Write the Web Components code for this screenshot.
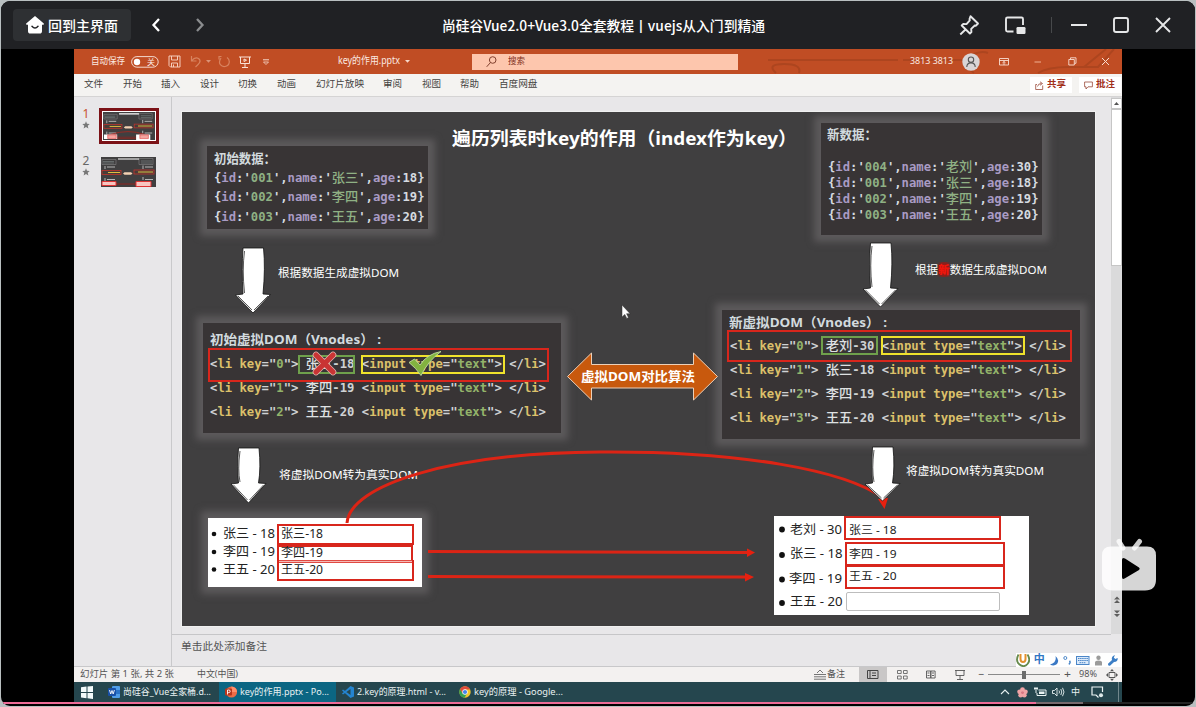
<!DOCTYPE html>
<html lang="zh-CN">
<head>
<meta charset="utf-8">
<title>尚硅谷Vue2.0+Vue3.0全套教程丨vuejs从入门到精通</title>
<style>
html,body{margin:0;height:100%;overflow:hidden;background:#b9bfc0}
body{font-family:"Noto Sans","Noto Sans CJK SC",sans-serif}
</style>
</head>
<body>
<course-player></course-player>
<script>
const make = (name, html, setup) => customElements.define(name, class extends HTMLElement {
  connectedCallback() {
    if (this.shadowRoot) return;
    this.attachShadow({ mode: 'open' }).innerHTML = html;
    if (setup) setup(this, this.shadowRoot);
  }
});
const num = (el, a) => parseFloat(el.getAttribute(a));

/* One line of text set to an exact measure */
make('fit-text', `<style>
:host{display:block;flex:none;white-space:pre;height:20px;line-height:20px}
span{display:inline-block;transform-origin:0 50%;white-space:pre;line-height:20px}
</style><span><slot></slot></span>`, (el, root) => {
  if (el.hasAttribute('size')) el.style.fontSize = el.getAttribute('size') + 'px';
  const span = root.querySelector('span'), w = num(el, 'w');
  el.style.width = w + 'px';
  const natural = span.getBoundingClientRect().width;
  if (natural) span.style.transform = `scaleX(${w / natural})`;
});

const icons = {
  home: [20, 20, '<path d="M10 1 1.2 8.6c-.4.5-.1 1.2.5 1.2H3v6.4c0 1.5 1 2.3 2.3 2.3h9.4c1.3 0 2.3-.8 2.3-2.3V9.8h1.3c.6 0 .9-.7.5-1.2L15.6 5.800z" fill="#fff"/><path d="M7 11.300q3 3.600 6 0" fill="none" stroke="#202124" stroke-width="1.500" stroke-linecap="round"/>'],
  back: [10, 16, '<path d="M8 2 2.500 8 8 14" fill="none" stroke="#fff" stroke-width="2.300"/>'],
  next: [10, 16, '<path d="M2 2 7.500 8 2 14" fill="none" stroke="#8a8c8e" stroke-width="2.300"/>'],
  pin: [22, 22, '<path d="M12.500 2.200 20 9.500l-2 2.200-1.200-.2-3.600 3.400.2 3.200-1.500 1.400-8.200-8 1.600-1.600 3.200.2 3.300-3.800-.3-1.300zM7.500 15.500l-5.200 5" fill="none" stroke="#e6e7e8" stroke-width="1.900" stroke-linejoin="round"/>'],
  pip: [22, 20, '<path d="M9.500 16.500H3.500q-1.500 0-1.500-1.500V4q0-1.500 1.500-1.500h14Q19 2.500 19 4v6" fill="none" stroke="#e6e7e8" stroke-width="1.900"/><rect x="12.500" y="12" width="9" height="7" rx="1.200" fill="#e6e7e8"/>'],
  wmin: [18, 18, '<path d="M1 9h16" stroke="#e6e7e8" stroke-width="1.900"/>'],
  wmax: [18, 18, '<rect x="2" y="2" width="14" height="14" rx="2" fill="none" stroke="#e6e7e8" stroke-width="1.900"/>'],
  wclose: [18, 18, '<path d="M2 2l14 14M16 2 2 16" stroke="#e6e7e8" stroke-width="1.900"/>'],
  toggle: [28, 12, '<rect x=".6" y=".6" width="26.600" height="10.600" rx="5.300" fill="none" stroke="#f3d9ce"/><circle cx="6" cy="6" r="3.200" fill="#fff"/>'],
  save: [13, 13, '<path d="M1 1h11v11H2.500L1 10.500zM3.500 1v4h6V1M3.500 12V8h6v4M5.500 12V9.500" fill="none" stroke="#f5cdbb"/>'],
  undo: [12, 13, '<path d="M1.500 1v5h5M1.500 6Q5 1.500 8.500 3.500C12 6 9 9 5.500 12" fill="none" stroke="#d8835f" stroke-width="1.200"/>'],
  redo: [13, 13, '<path d="M3.500 1.500H1v3M3 3C-1 9 4 12 7 11.500c5-1 5.500-6.500 2-9" fill="none" stroke="#d8835f" stroke-width="1.200"/>'],
  show: [12, 12, '<path d="M0 1h12M1.500 1v6.500h9V1M6 7.500V11M3 11.500h6M5 3l2.500 1.200L5 5.500z" fill="none" stroke="#fbe3d8"/>'],
  more: [6, 6, '<path d="M0 .8h6" stroke="#f6d8ca"/><path d="M.5 3h5L3 5.500z" fill="none" stroke="#f6d8ca" stroke-width=".8"/>'],
  caret: [5, 3, '<path d="M0 0h5L2.500 2.800z" fill="#f6d8ca"/>'],
  find: [11, 12, '<circle cx="6.700" cy="4" r="3.300" fill="none" stroke="#80402e"/><path d="M4.500 6.500.7 10.800" stroke="#80402e"/>'],
  user: [18, 18, '<circle cx="9" cy="9" r="8.700" fill="#d9d5d6"/><circle cx="9" cy="6.700" r="2.700" fill="none" stroke="#555" stroke-width="1.100"/><path d="M4.800 14c0-5.500 8.400-5.500 8.400 0" fill="none" stroke="#555" stroke-width="1.100"/>'],
  ribbon: [10, 8, '<path d="M.5.500h9v6.500h-9zM.5 2.500h9M5 7V3.500M3.500 4.800 5 3.500l1.500 1.300" fill="none" stroke="#f8ddd1" stroke-width=".9"/>'],
  min: [8, 8, '<path d="M.5 4h6.500" stroke="#f0b192"/>'],
  restore: [9, 9, '<path d="M.8 2.500h5.500V8H.8zM2.500 2.500V.8H8v5.500H6.500" fill="none" stroke="#f8ddd1" stroke-width=".9"/>'],
  close: [9, 9, '<path d="m1 1 7 7M8 1 1 8" stroke="#f8ddd1"/>'],
  share: [9, 9, '<path d="M2 3.500H.7v5h7v-4M2.500 5.500q.5-3 4-3M5 .8l2.500 1.700L5 4.300" fill="none" stroke="#9b4a3a" stroke-width=".8"/>'],
  comment: [9, 9, '<path d="M.6 1h7.800v4.800H4L2 8V5.800H.6z" fill="none" stroke="#9b4a3a" stroke-width=".8"/>'],
  star: [8, 8, '<path d="m4 .3 1 2.500 2.700.2-2 1.700.7 2.800L4 6 1.600 7.500l.7-2.800-2-1.700L3 2.800z" fill="#777"/>'],
  up: [9, 9, '<path d="M4.500 3 7 6H2z" fill="#555"/>'],
  pgup: [6, 9, '<path d="M3 .5 6 3.500H0zM3 4l3 3H0z" fill="#5e5e5e"/>'],
  pgdn: [6, 9, '<path d="M3 8 0 5h6zM3 4.500l-3-3h6z" fill="#5e5e5e"/>'],
  notes: [12, 11, '<path d="M0 5.500h12M0 7.800h12M0 10.200h12M3 4l3-3 3 3" fill="none" stroke="#666" stroke-width=".9"/>'],
  normal: [12, 9, '<path d="M.5.500h10.500v8H.5zM3 .5v8M5 3h4M5 5.500h4" fill="none" stroke="#444"/>'],
  sorter: [11, 10, '<path d="M.5.500h3.700v3H.5zM6.500.5h3.700v3H6.500zM.5 6h3.700v3H.5zM6.500 6h3.700v3H6.500z" fill="none" stroke="#666" stroke-width=".9"/>'],
  reading: [10, 9, '<path d="M.5 1h4.300v7H.5zM4.800 1h4.300v7H4.800zM1.500 3h2M1.500 5.500h2M6 3h2M6 5.500h2" fill="none" stroke="#555" stroke-width=".9"/>'],
  proj: [10, 10, '<path d="M0 .5h10M1 .5v5h8v-5M5 5.500v4M2 9.500h6" fill="none" stroke="#555" stroke-width=".9"/>'],
  fitwin: [12, 12, '<path d="M3 3.500h6v5H3z" fill="none" stroke="#555"/><path d="m6 0 2 2.300H4zM6 12l2-2.300H4zM0 6l2-2v4zM12 6l-2-2v4z" fill="#555"/>'],
  win: [13, 13, '<path d="M0 1.200 5.500.5v5.500H0zM6.500.4 12 0v6H6.500zM0 7h5.500v5.200L0 11.500zM6.500 7H12v6l-5.500-.7z" fill="#f2fafa"/>'],
  word: [12, 12, '<rect x="4" width="8" height="12" rx="1" fill="#4f9de8"/><path d="M4 4h8v4H4z" fill="#2b74c8"/><rect y="2" width="8" height="8" rx="1" fill="#1850a8"/><path d="m1.500 4 1.200 4L4 4.500 5.200 8l1.200-4" fill="none" stroke="#fff" stroke-width=".9"/>'],
  ppt: [12, 12, '<circle cx="6.500" cy="6" r="5.600" fill="#ed6c47"/><path d="M6.500.5A5.500 5.500 0 0 1 12 6H6.500z" fill="#ff8f6b"/><rect y="2.500" width="7" height="7" rx="1" fill="#b7361d"/><path d="M2.500 8.500V4h1.200q1.500 0 1.500 1.300T3.700 6.600H2.500" fill="none" stroke="#fff" stroke-width=".9"/>'],
  code: [12, 12, '<path d="M8.500 0 12 1.500v9L8.500 12 0 4.500 1 3.500 8.500 9V3L1 8.500l-1-1z" fill="#2484d0"/>'],
  chrome: [12, 12, '<circle cx="6" cy="6" r="5.700" fill="#f2c52c"/><path d="M6 .3A5.700 5.700 0 0 0 1 3.300L3.800 8 6 3.500h5A5.700 5.700 0 0 0 6 .3" fill="#df4b3c"/><path d="M1 3.200A5.700 5.700 0 0 0 5.500 11.700L8 7.500 4 8z" fill="#35a153"/><circle cx="6" cy="6" r="2.700" fill="#fff"/><circle cx="6" cy="6" r="2.100" fill="#4385ec"/>'],
  chev: [10, 6, '<path d="m1 5 4-4 4 4" fill="none" stroke="#e8f2f2" stroke-width="1.100"/>'],
  flower: [11, 11, '<g fill="#f0a3a5"><circle cx="5.500" cy="2.700" r="2.400"/><circle cx="2.600" cy="4.800" r="2.400"/><circle cx="8.400" cy="4.800" r="2.400"/><circle cx="3.700" cy="8.200" r="2.400"/><circle cx="7.300" cy="8.200" r="2.400"/></g><circle cx="5.500" cy="5.700" r="1.300" fill="#dc7582"/>'],
  battery: [13, 10, '<path d="M4.500 3h7.500v5.500H3V6" fill="none" stroke="#eaf3f3"/><path d="M5 4.500h5.500V7H5z" fill="#eaf3f3"/><path d="M0 1.500h4M1 0v3M3 0v3M2 3v3" stroke="#eaf3f3" fill="none"/>'],
  sound: [13, 10, '<path d="M.5 3.500H2.500L5 1v8L2.500 6.500H.5zM7 3.500q1 1.500 0 3M8.800 2q2 3 0 6M10.500.8q3 4.200 0 8.400" fill="none" stroke="#e8f2f2" stroke-width=".9"/>'],
  note: [13, 12, '<path d="M11.500 6V1H1v8h4l2.500 2.500" fill="none" stroke="#eef6f6" stroke-width="1.200"/><circle cx="10" cy="9.300" r="2" fill="#dce7e8"/>'],
  ulogo: [14, 14, '<path d="M2.500 1.500Q-1 8 3.500 11.500t8-.5Q15 7 11.500 1.500" fill="none" stroke="#668a4c" stroke-width="1.800"/><path d="M4.500 1v5q0 3 2.500 3t2.500-3V1" fill="none" stroke="#e3902d" stroke-width="2"/>'],
  moon: [11, 11, '<path d="M6.500 1Q11 5 8 9 5 11.500 1 9.500 8 8 6.500 1" fill="#3b79c5"/>'],
  punct: [9, 10, '<circle cx="2.300" cy="3" r="1.500" fill="none" stroke="#4b86c8"/><path d="M6.500 5.800q1.500 2-.7 3.500" fill="none" stroke="#4b86c8" stroke-width="1.500"/>'],
  keys: [14, 9, '<rect x=".5" y=".5" width="12.500" height="8" fill="#dceafa" stroke="#4b86c8"/><path d="M2 2.500h10M2 4.500h10M3.500 6.700H10" stroke="#4b86c8" stroke-dasharray="1.500 .6"/>'],
  person: [9, 11, '<circle cx="4.500" cy="2.800" r="2.200" fill="#9b9b9b"/><path d="M1 10.500V7.500q0-2 3.500-2T8 7.500v3z" fill="#9b9b9b"/>'],
  wrench: [11, 11, '<path d="M1 8.800 5 5q-1-3 2-4.500L8 0 6.800 2.500l1.500 1.600L10.700 3q.3 4-3.700 4L3 10.700Q.5 11 1 8.800" fill="#3d7fc6"/>'],
  tv: [56, 54, '<path d="M18 3.500 22 10M38.500 3.500 33.500 10" stroke="#fff" stroke-width="5" stroke-linecap="round" opacity=".8"/><path fill-rule="evenodd" fill="#fff" opacity=".84" d="M10 8.500h36q9 0 9 9v24q0 11-11 11H12q-11 0-11-11v-24q0-9 9-9M21 22v17q0 3 3 1.300L38 32q1.500-1.200 0-2.500L24 20.500Q21 19 21 22"/>'],
};
make('ui-icon', '', (el, root) => {
  const [w, h, body] = icons[el.getAttribute('name')];
  root.innerHTML = `<style>:host{display:block;flex:none;width:${w}px;height:${h}px}svg{display:block}</style><svg width="${w}" height="${h}" viewBox="0 0 ${w} ${h}">${body}</svg>`;
});

make('player-header', `<style>
:host{display:grid;grid-template-columns:440.500px 1fr 237.500px;align-items:center;height:48px;background:#202124;color:#fff}
div{display:flex;align-items:center}
.home{margin-left:12px;width:118px;height:32px;border-radius:4px;background:#2e3033;gap:3px;padding-left:12px;box-sizing:border-box}
fit-text{font-family:"Noto Sans CJK SC",sans-serif;font-weight:500;margin-top:-1px}
.sep{width:1px;height:16px;background:#47494b;margin:0 18px 0 25px}
</style>
<div><div class="home"><ui-icon name="home"></ui-icon><fit-text w="70" size="14">回到主界面</fit-text></div><ui-icon name="back" style="margin-left:20px"></ui-icon><ui-icon name="next" style="margin-left:34px"></ui-icon></div>
<fit-text w="323" size="14">尚硅谷Vue2.0+Vue3.0全套教程丨vuejs从入门到精通</fit-text>
<div><ui-icon name="pin"></ui-icon><ui-icon name="pip" style="margin-left:24px"></ui-icon><span class="sep"></span><ui-icon name="wmin"></ui-icon><ui-icon name="wmax" style="margin-left:24px"></ui-icon><ui-icon name="wclose" style="margin-left:24px"></ui-icon></div>`);

make('ppt-titlebar', `<style>
:host{display:grid;grid-template-columns:398px 266px 1fr;align-items:center;height:25px;background:#c04d24;color:#fbe9e1;position:relative}
.deco{position:absolute;left:664px;top:0;z-index:0}
div{display:flex;align-items:center;position:relative;height:24px}
.search{background:#fdc6ad;color:#80301d;height:16px}
.tg{position:relative;margin-left:6px}
.tg fit-text{position:absolute;left:16px;top:-4px}
</style>
<svg class="deco" width="384" height="25" fill="none" stroke="#ad451f" stroke-width="2"><path d="M30 11h130M38 24q-10-9 8-9t15 9M165 11h60M236 24c-20-14 4-24 14-20M300 24q10-6 30-6h30l16-18M346 18l22-18"/></svg>
<div><fit-text w="34" size="9.500" style="margin:-2px 0 0 17px">自动保存</fit-text><span class="tg"><ui-icon name="toggle"></ui-icon><fit-text w="8" size="8">关</fit-text></span><ui-icon name="save" style="margin-left:9px"></ui-icon><ui-icon name="undo" style="margin-left:9px"></ui-icon><ui-icon name="caret" style="margin-left:4px;opacity:.5"></ui-icon><ui-icon name="redo" style="margin-left:7px"></ui-icon><ui-icon name="show" style="margin-left:8px"></ui-icon><ui-icon name="more" style="margin-left:12px"></ui-icon><fit-text w="62" size="10" style="margin-left:69px;margin-top:-3px">key的作用.pptx</fit-text><ui-icon name="caret" style="margin-left:5px"></ui-icon></div>
<div class="search"><ui-icon name="find" style="margin-left:14px"></ui-icon><fit-text w="17" size="9" style="margin:-2px 0 0 11px">搜索</fit-text></div>
<div><fit-text w="43" size="9.500" style="margin:-2px 0 0 172px">3813 3813</fit-text><ui-icon name="user" style="margin-left:9px"></ui-icon><ui-icon name="ribbon" style="margin-left:19px"></ui-icon><ui-icon name="min" style="margin-left:25px"></ui-icon><ui-icon name="restore" style="margin-left:26px"></ui-icon><ui-icon name="close" style="margin-left:24px"></ui-icon></div>`);

make('ppt-menu', `<style>
:host{display:flex;align-items:center;height:23px;background:#f4f3f1;color:#454341;padding-left:10px;border-bottom:1px solid #d5d4d4;box-sizing:border-box}
nav{display:flex;gap:19.600px;flex:1;margin-top:-2px}
.b{display:flex;align-items:center;gap:3px;height:16px;background:#fff;color:#a2301b;margin-right:7px;padding:0 5px 0 5px;width:32px;font-weight:600}
.b fit-text{margin-top:-2px}
.b:last-child{margin-right:1px}
</style>
<nav>${['文件', '开始', '插入', '设计', '切换', '动画', '幻灯片放映', '审阅', '视图', '帮助', '百度网盘'].map(t => `<fit-text size="9.600" w="${{ 2: 19, 4: 38.500, 5: 48 }[t.length]}">${t}</fit-text>`).join('')}</nav>
<span class="b"><ui-icon name="share"></ui-icon><fit-text w="19" size="9.500">共享</fit-text></span><span class="b"><ui-icon name="comment"></ui-icon><fit-text w="19" size="9.500">批注</fit-text></span>`);

const mini = `<rect width="55" height="30" fill="#403f40"/><g fill="none" stroke="#747274" stroke-width=".8"><path d="M1 2.500h14v5H1zM38 1.500h14v6H38z"/></g><path d="M17 2h21" stroke="#fff" stroke-width="1.200"/><path d="M2 4.500h11M40 4h11M2 6h11M40 6h11" stroke="#8c9a98" stroke-width=".5"/><path d="M4 9v3M42 8.500V12M4 21v3M42 20v3M6 10h8M44 10h8M6 22.500h8M44 22.500h8" stroke="#d6d6d6" stroke-width=".8"/><rect x="1" y="13.500" width="19" height="4" stroke="#c3332c" fill="#463d38" stroke-width=".8"/><rect x="33" y="13" width="20" height="4" stroke="#c3332c" fill="#463d38" stroke-width=".8"/><path d="M7 15.500h12M37 15h15" stroke="#dfbf40"/><path d="M22 16.500 23.500 15.300h6.500l1.500 1.200-1.500 1.200h-6.500z" fill="#f3d1b2"/>`;
make('slide-thumb', `<style>
:host{display:grid;grid-template-columns:12px auto;column-gap:7px;color:#666;font-size:12px;padding-left:6px}
.l{display:flex;flex-direction:column;align-items:center;line-height:12px;gap:1px}
.f{justify-self:start;padding:2px}
:host([active]) .l{color:#c7502b}
:host([active]) .f{background:#fff;border:3px solid #7c1217;padding:1px}
svg{display:block}
</style><span class="l"><slot></slot><ui-icon name="star"></ui-icon></span><span class="f"><svg width="53" height="29" viewBox="0 0 55 30" preserveAspectRatio="none"></svg></span>`, (el, root) => {
  const act = el.hasAttribute('active'), svg = root.querySelector('svg');
  svg.setAttribute('width', act ? 52 : 55); svg.setAttribute('height', act ? 28 : 30);
  svg.innerHTML = mini + (act ? '<path d="M8 24Q27 18 44 24" fill="none" stroke="#b3261e" stroke-width=".8"/><path d="M15 27h20M15 28.500h20" stroke="#8e241f" stroke-width=".8"/><path d="M1 24h14v5H1zM35 24h15v6H35z" fill="#fff"/><path d="M5 24.500h9v4H5zM39 24.500h9v4h-9z" fill="#f2a5a0" stroke="#d33" stroke-width=".6"/>' : '<path d="M15 27h20" stroke="#8e241f"/><path d="M1 24.500h14v4H1zM35 24.500h15v5H35z" fill="#f7c5c0" stroke="#d33"/>');
});

/* Nodes on the slide take their place from x / y / w / h */
const OX = 182, OY = 112;
const place = el => {
  const s = el.style;
  s.left = num(el, 'x') - OX + 'px'; s.top = num(el, 'y') - OY + 'px';
  if (el.hasAttribute('w')) s.width = num(el, 'w') + 'px';
  if (el.hasAttribute('h')) s.height = num(el, 'h') + 'px';
};
make('slide-panel', `<style>
:host{position:absolute;background:#383435}
:host([glow]){box-shadow:0 0 7px 7px #5c5a5b}
:host([paper]){background:#fff;color:#222}
</style><slot></slot>`, place);
make('slide-frame', `<style>:host{position:absolute;box-sizing:border-box;border:2px solid var(--c,#d8261c)}</style>`, place);
make('slide-label', `<style>:host{position:absolute;display:block}</style>`, (el, root) => {
  const t = document.createElement('fit-text');
  el.style.left = num(el, 'x') - OX + 'px'; el.style.top = num(el, 'y') - 10 - OY + 'px';
  t.setAttribute('w', el.getAttribute('w')); t.setAttribute('size', el.getAttribute('size') || 12);
  t.append(document.createElement('slot'));
  root.append(t);
});
const codeCss = `:host{position:absolute;display:block;font-family:"DejaVu Sans Mono","Noto Sans CJK SC",monospace;font-weight:bold;color:#d6dbe0}
i{font-style:normal;font-weight:500;font-size:13px;line-height:1}`;
make('data-line', `<style>${codeCss} b{color:#a99bc4}s,i{color:#8fb184;text-decoration:none}</style>`, (el, root) => {
  el.style.left = num(el, 'x') - OX + 'px'; el.style.top = num(el, 'y') - 10 - OY + 'px';
  const [id, name, age] = el.dataset.v.split(' ');
  root.innerHTML += `<fit-text w="210.500" size="12">{<b>id</b>:'<s>${id}</s>',<b>name</b>:'<i>${name}</i>',<b>age</b>:${age}}</fit-text>`;
});
make('li-line', `<style>${codeCss} :host{color:#cfd2d4} b{color:#dcc06a}s{color:#93b36a;text-decoration:none}i{color:#dfe1e2}</style>`, (el, root) => {
  el.style.left = num(el, 'x') - OX + 'px'; el.style.top = num(el, 'y') - 10 - OY + 'px';
  const [k, name, age] = el.dataset.v.split(' ');
  root.innerHTML += `<fit-text w="336" size="12">&lt;<b>li key</b>="<s>${k}</s>"&gt; <i>${name}</i>-${age} &lt;<b>input type</b>="<s>text</s>"&gt; &lt;/<b>li</b>&gt;</fit-text>`;
});

const down = (x, y, sy, ty) => `<g transform="translate(${x} 0)"><path d="M-10 ${y}H10.500Q12.500 ${y + 20} 10 ${sy - 1}L17.500 ${sy - .5} 0 ${ty} -17.500 ${sy} -10 ${sy - 1}Q-11.500 ${y + 20} -10 ${y}" fill="#fff" stroke="#111" stroke-width=".8"/><path d="M-8.500 ${y + 3}Q-11 ${y + 22} -8.500 ${sy - 2}M15 ${sy + 1} 1 ${ty - 3}M-15 ${sy + 1} -1 ${ty - 3}" fill="none" stroke="#111" stroke-width=".7"/></g>`;
make('ppt-slide', `<style>
:host{display:block;position:relative;width:913px;height:514px;background:#403f40;color:#fff;overflow:hidden}
.ov{position:absolute;left:0;top:0}
.b{font-weight:700}.h{font-weight:700;color:#d2dade}
.k{color:#222}
em{font-style:normal;color:#f0160c;font-weight:900;background:radial-gradient(#c01510,#8a1f1b 60%,#403f40)}
.in{--c:#bdbdbd}
</style>
<slide-panel glow x="207" y="146" w="221" h="83"></slide-panel>
<slide-panel glow x="821" y="123" w="221" h="112"></slide-panel>
<slide-panel glow x="203" y="323" w="358" h="110"></slide-panel>
<slide-panel glow x="722" y="310" w="358" h="129"></slide-panel>
<slide-panel glow paper x="208" y="518" w="214" h="69"></slide-panel>
<slide-panel paper x="774" y="516" w="255" h="99"></slide-panel>
<slide-label class="b" x="452" y="138" w="345" size="18.500">遍历列表时key的作用（index作为key）</slide-label>
<slide-label class="h" x="214" y="158" w="62" size="13">初始数据：</slide-label>
<data-line x="214" y="178" data-v="001 张三 18"></data-line>
<data-line x="214" y="197" data-v="002 李四 19"></data-line>
<data-line x="214" y="216.500" data-v="003 王五 20"></data-line>
<slide-label class="h" x="827" y="134" w="50" size="13">新数据：</slide-label>
<data-line x="827.500" y="166.500" data-v="004 老刘 30"></data-line>
<data-line x="827.500" y="182.500" data-v="001 张三 18"></data-line>
<data-line x="827.500" y="198.500" data-v="002 李四 19"></data-line>
<data-line x="827.500" y="214.500" data-v="003 王五 20"></data-line>
<slide-label x="278" y="273" w="121" size="11.500">根据数据生成虚拟DOM</slide-label>
<slide-label x="914.500" y="269.500" w="132" size="11.500">根据<em>新</em>数据生成虚拟DOM</slide-label>
<slide-label class="h" x="210" y="339" w="171" size="13">初始虚拟DOM（Vnodes） :</slide-label>
<li-line x="210" y="364" data-v="0 张三 18"></li-line>
<li-line x="210" y="387.500" data-v="1 李四 19"></li-line>
<li-line x="210" y="411.500" data-v="2 王五 20"></li-line>
<slide-label class="h" x="729" y="321.500" w="158" size="13">新虚拟DOM（Vnodes） :</slide-label>
<li-line x="730" y="345.500" data-v="0 老刘 30"></li-line>
<li-line x="730" y="369.500" data-v="1 张三 18"></li-line>
<li-line x="730" y="393.500" data-v="2 李四 19"></li-line>
<li-line x="730" y="417.500" data-v="3 王五 20"></li-line>
<slide-frame x="208" y="348" w="341" h="34"></slide-frame>
<slide-frame x="298" y="355" w="57" h="19" style="--c:#6fa04c"></slide-frame>
<slide-frame x="361" y="355" w="144" h="19" style="--c:#efe22c"></slide-frame>
<slide-frame x="727" y="330" w="345" h="32"></slide-frame>
<slide-frame x="821" y="336" w="57" h="19" style="--c:#6fa04c"></slide-frame>
<slide-frame x="881" y="336" w="144" h="19" style="--c:#efe22c"></slide-frame>
<slide-label x="279" y="474.500" w="139" size="11.500">将虚拟DOM转为真实DOM</slide-label>
<slide-label x="906" y="470.500" w="138" size="11.500">将虚拟DOM转为真实DOM</slide-label>
<slide-frame x="277" y="524" w="137" h="21"></slide-frame>
<slide-frame x="277" y="545" w="136" h="18"></slide-frame>
<slide-frame x="277" y="560" w="137" h="21"></slide-frame>
<slide-frame class="in" x="846" y="592" w="154" h="19" style="border-width:1px;border-radius:2px"></slide-frame>
<slide-frame x="844" y="516" w="157" h="24"></slide-frame>
<slide-frame x="845" y="542" w="160" h="24"></slide-frame>
<slide-frame x="845" y="565" w="160" h="24"></slide-frame>
<div class="k">
<slide-label x="222.500" y="534" w="52" size="12.500">张三 - 18</slide-label><slide-label x="281" y="534" w="42" size="12">张三-18</slide-label>
<slide-label x="222.500" y="552" w="52" size="12.500">李四 - 19</slide-label><slide-label x="281" y="553" w="42" size="12">李四-19</slide-label>
<slide-label x="222.500" y="569.500" w="52" size="12.500">王五 - 20</slide-label><slide-label x="281" y="570" w="42" size="12">王五-20</slide-label>
<slide-label x="790" y="530" w="52" size="12.500">老刘 - 30</slide-label><slide-label x="849" y="529.500" w="47.500" size="11.500">张三 - 18</slide-label>
<slide-label x="789.500" y="553.500" w="52.500" size="12.500">张三 - 18</slide-label><slide-label x="849" y="554" w="47.500" size="11.500">李四 - 19</slide-label>
<slide-label x="789" y="578.500" w="53" size="12.500">李四 - 19</slide-label><slide-label x="849" y="576" w="47.500" size="11.500">王五 - 20</slide-label>
<slide-label x="789.500" y="602" w="52.500" size="12.500">王五 - 20</slide-label>
</div>
<svg class="ov" width="913" height="514" viewBox="182 112 913 514">
<g fill="#111"><circle cx="214" cy="534" r="2.300"/><circle cx="214" cy="552" r="2.300"/><circle cx="214" cy="569.500" r="2.300"/><circle cx="782" cy="529.500" r="2.900"/><circle cx="782" cy="555" r="2.900"/><circle cx="782" cy="579.500" r="2.900"/><circle cx="782" cy="603" r="2.900"/></g>
<path d="M279 561.500h133" stroke="#f5b9b6" stroke-width="1.500"/>
<g fill="none" stroke="#dc2415" stroke-width="3"><path d="M347 523C350 485 450 453 600 452C740 451 845 470 883 498"/><path d="M428 551.500 748 552.500M428 576.500 746 577"/></g>
<path d="M747 548.500 755 552.500 747 557zM745 573 754 577 745 581.500zM878 499l10-1-3.500 11z" fill="#e8200f"/>
${down(253, 248, 295, 313)}${down(880.500, 243, 289, 307)}${down(248.500, 448, 484, 503)}${down(882.500, 447, 484, 501)}
<path d="M567.500 376.500 591.500 353V364.500H693.500V353L717.500 376.500 693.500 400V388H591.500V400z" fill="#c8590d" stroke="#ecd0b8"/>
<path d="m316 355 17 17M333 355 316 372" stroke="#e3b5b2" stroke-width="6.600" stroke-linecap="round"/><path d="m316 355 17 17M333 355 316 372" stroke="#c93434" stroke-width="5.200" stroke-linecap="round"/>
<path d="m409 362.500 5.500-3.500 5.500 6Q427 354 441 351.500 428 361 421 375.500 416 368 409 362.500z" fill="#82b340" stroke="#c2dba0" stroke-width=".9"/>
<path d="M622 305v12l2.800-2.600 2 4 1.700-.8-1.900-3.900h3.500z" fill="#fff" stroke="#333" stroke-width=".5"/>
</svg>
<slide-label class="b" x="580.500" y="376" w="114" size="13">虚拟DOM对比算法</slide-label>`);

make('ppt-workspace', `<style>
:host{display:grid;grid-template-columns:98px 1fr 11px;height:569px;background:#e8e7e9;position:relative}
aside{border-right:1px solid #c9c9cb;display:flex;flex-direction:column;gap:11px;padding-top:11px;box-sizing:border-box}
main{display:flex;flex-direction:column;min-width:0}
ppt-slide{margin:15px 0 0 10px;outline:1px solid #f0f0f0}
.notes{margin-top:8px;border-top:1px solid #c6c6c8;padding:1px 0 0 9px;color:#555;flex:1}
.sb{background:#dadadb;display:flex;flex-direction:column;align-items:center;height:537px}
.sb .u{width:9px;height:9px;background:#fff;border:1px solid #c6c6c6;margin-top:1px}
.sb .t{width:9px;height:155px;background:#fff;border:1px solid #c6c6c6;margin-bottom:330px}
.sb ui-icon{margin-bottom:4px}
</style>
<aside><slide-thumb active>1</slide-thumb><slide-thumb>2</slide-thumb></aside>
<main><ppt-slide></ppt-slide><div class="notes"><fit-text w="86" size="10.500">单击此处添加备注</fit-text></div></main>
<div class="sb"><span class="u"><ui-icon name="up"></ui-icon></span><span class="t"></span><ui-icon name="pgup"></ui-icon><ui-icon name="pgdn"></ui-icon></div>`);

make('ime-bar', `<style>:host{position:absolute;right:0;top:-14px;display:flex;align-items:center;width:106px;height:14px;background:#fff;color:#3277c4;font-weight:600;justify-content:space-between;padding:0 4px 0 0;box-sizing:border-box}fit-text{margin-top:-2px}</style>
<ui-icon name="ulogo"></ui-icon><fit-text w="11" size="11">中</fit-text><ui-icon name="moon"></ui-icon><ui-icon name="punct"></ui-icon><ui-icon name="keys"></ui-icon><ui-icon name="person"></ui-icon><ui-icon name="wrench"></ui-icon>`);
make('ppt-status', `<style>
:host{display:flex;align-items:center;height:16px;background:#f3f1f0;color:#555;border-top:1px solid #c8c8ca;box-sizing:border-box;position:relative}
fit-text{margin-top:-1px}
.n{width:28px;height:15px;background:#c9c7c7;display:grid;place-items:center;margin-left:14px}
.z{display:flex;align-items:center;width:72px;height:9px;margin-left:4px;background:linear-gradient(#8a8a8a,#8a8a8a) 0 50%/100% 1px no-repeat}
.z:after{content:"";width:4px;height:8px;background:#6b6b6b;margin-left:34px}
</style>
<fit-text w="94" size="9.500" style="margin-left:6px">幻灯片 第 1 张, 共 2 张</fit-text><fit-text w="41" size="9.500" style="margin-left:23px;margin-right:576px">中文(中国)</fit-text>
<ui-icon name="notes"></ui-icon><fit-text w="18" size="9.500" style="margin-left:1px">备注</fit-text><span class="n"><ui-icon name="normal"></ui-icon></span><ui-icon name="sorter" style="margin-left:10px"></ui-icon><ui-icon name="reading" style="margin-left:18px"></ui-icon><ui-icon name="proj" style="margin-left:19px"></ui-icon><fit-text w="6" size="11" style="margin-left:13px">−</fit-text><span class="z"></span><fit-text w="7" size="11" style="margin-left:4px">+</fit-text><fit-text w="18" size="9.500" style="margin-left:8px">98%</fit-text><ui-icon name="fitwin" style="margin-left:9px"></ui-icon>
<ime-bar></ime-bar>`);

make('task-button', `<style>:host{display:flex;align-items:center;height:20px;width:117px;box-sizing:border-box;padding-left:6px;gap:3px}:host([active]){background:#0b6683}</style><slot name="icon"></slot><slot></slot>`);
make('win-taskbar', `<style>
:host{display:flex;align-items:center;height:20px;background:#25464e;color:#e9f1f2;overflow:hidden}
.tray{display:flex;align-items:center;margin-left:auto;height:20px}
.e{width:1px;height:20px;background:#71878c;margin:0 3px 0 14px}
</style>
<ui-icon name="win" style="margin:0 8px 0 7px"></ui-icon>
<task-button><ui-icon slot="icon" name="word"></ui-icon><fit-text w="88" size="9.500">尚硅谷_Vue全家桶.d...</fit-text></task-button>
<task-button active><ui-icon slot="icon" name="ppt"></ui-icon><fit-text w="89" size="9.500">key的作用.pptx - Po...</fit-text></task-button>
<task-button><ui-icon slot="icon" name="code"></ui-icon><fit-text w="89" size="9.500">2.key的原理.html - v...</fit-text></task-button>
<task-button><ui-icon slot="icon" name="chrome"></ui-icon><fit-text w="89" size="9.500">key的原理 - Google...</fit-text></task-button>
<div class="tray"><ui-icon name="chev"></ui-icon><ui-icon name="flower" style="margin-left:7px"></ui-icon><ui-icon name="battery" style="margin-left:6px"></ui-icon><ui-icon name="sound" style="margin-left:5px"></ui-icon><fit-text w="9" size="9.500" style="margin-left:6px">中</fit-text><ui-icon name="note" style="margin-left:11px"></ui-icon><span class="e"></span></div>`);

make('course-player', `<style>
:host{display:block;width:1194px;height:705px;margin:1px;border-radius:9px;overflow:hidden;background:#000;position:relative}
.screen{display:flex;flex-direction:column;width:1048px;height:653px;margin-left:73px}
.bar{height:2px;display:flex;background:#242424}.bar i{width:1035px;background:#ee6b97}.bar b{width:47px;background:#77696d}
.tv{position:absolute;left:1100px;top:537px}
</style>
<player-header></player-header>
<div class="screen"><ppt-titlebar></ppt-titlebar><ppt-menu></ppt-menu><ppt-workspace></ppt-workspace><ppt-status></ppt-status><win-taskbar></win-taskbar></div>
<div class="bar"><i></i><b></b></div>
<ui-icon class="tv" name="tv"></ui-icon>`);
</script>
</body>
</html>
